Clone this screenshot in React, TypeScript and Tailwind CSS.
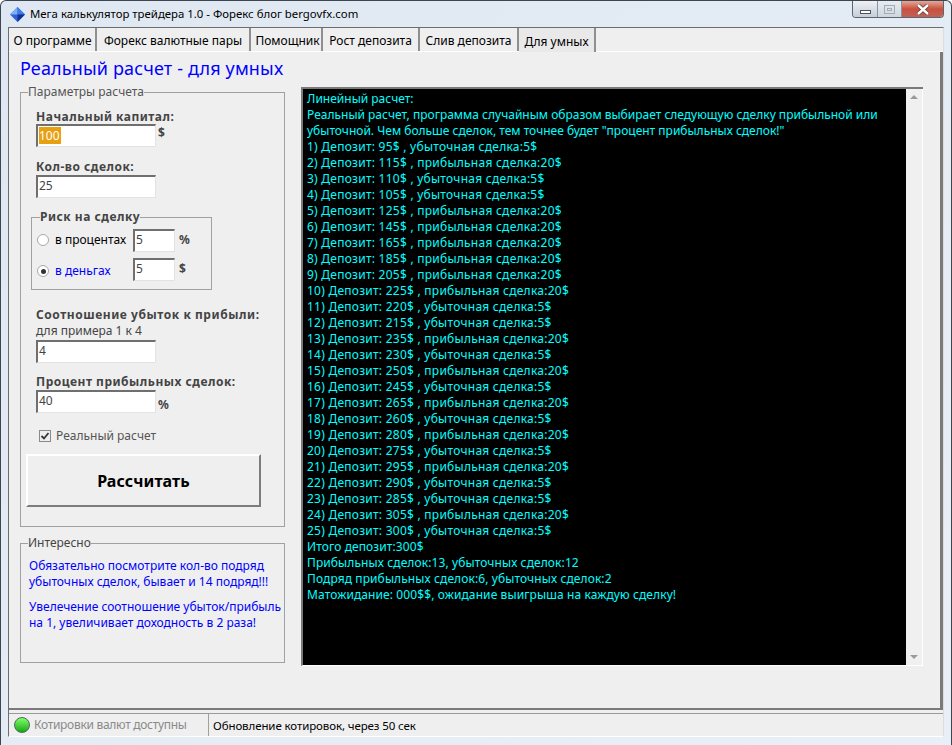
const tabs = [
  { label: "О программе", width: "w-[87px]" },
  { label: "Форекс валютные пары", width: "w-[154px]" },
  { label: "Помощник", width: "w-[72px] pl-[3px]" },
  { label: "Рост депозита", width: "w-[97px]" },
  { label: "Слив депозита", width: "w-[99px]" },
];

const deals = [
  "1) Депозит: 95$ , убыточная сделка:5$",
  "2) Депозит: 115$ , прибыльная сделка:20$",
  "3) Депозит: 110$ , убыточная сделка:5$",
  "4) Депозит: 105$ , убыточная сделка:5$",
  "5) Депозит: 125$ , прибыльная сделка:20$",
  "6) Депозит: 145$ , прибыльная сделка:20$",
  "7) Депозит: 165$ , прибыльная сделка:20$",
  "8) Депозит: 185$ , прибыльная сделка:20$",
  "9) Депозит: 205$ , прибыльная сделка:20$",
  "10) Депозит: 225$ , прибыльная сделка:20$",
  "11) Депозит: 220$ , убыточная сделка:5$",
  "12) Депозит: 215$ , убыточная сделка:5$",
  "13) Депозит: 235$ , прибыльная сделка:20$",
  "14) Депозит: 230$ , убыточная сделка:5$",
  "15) Депозит: 250$ , прибыльная сделка:20$",
  "16) Депозит: 245$ , убыточная сделка:5$",
  "17) Депозит: 265$ , прибыльная сделка:20$",
  "18) Депозит: 260$ , убыточная сделка:5$",
  "19) Депозит: 280$ , прибыльная сделка:20$",
  "20) Депозит: 275$ , убыточная сделка:5$",
  "21) Депозит: 295$ , прибыльная сделка:20$",
  "22) Депозит: 290$ , убыточная сделка:5$",
  "23) Депозит: 285$ , убыточная сделка:5$",
  "24) Депозит: 305$ , прибыльная сделка:20$",
  "25) Депозит: 300$ , убыточная сделка:5$",
];

const summary = [
  "Итого депозит:300$",
  "Прибыльных сделок:13, убыточных сделок:12",
  "Подряд прибыльных сделок:6, убыточных сделок:2",
  "Матожидание: 000$$, ожидание выигрыша на каждую сделку!",
];

const Field = ({ value, className = "w-[120px]" }: { value: string; className?: string }) => (
  <div className={`h-[23px] bg-white border border-[#e3e3e3] border-t-2 border-l-2 border-t-[#6f6f6f] border-l-[#6f6f6f] pl-[1px] text-[#444] leading-[17px] ${className}`}>
    {value}
  </div>
);

const Radio = ({ checked }: { checked?: boolean }) => (
  <span className="w-[12px] h-[12px] rounded-full bg-white border border-[#a8a8a8] flex items-center justify-center shrink-0">
    {checked && <span className="w-[5px] h-[5px] rounded-full bg-[#333]" />}
  </span>
);

export default function App() {
  return (
    <div className="w-[952px] h-[745px] overflow-hidden flex flex-col bg-gradient-to-br from-[#dfe8f2] to-[#e9eff6] border-t border-x border-[#3c4650] rounded-t-[6px] text-[12px] font-['Noto_Sans','Liberation_Sans',sans-serif]">
      {/* title bar */}
      <div className="h-[26px] shrink-0 flex items-start justify-between pl-[8px] pr-[7px]">
        <div className="flex items-center gap-[4px] h-[26px] text-black">
          <svg width="17" height="17" viewBox="0 0 17 17">
            <polygon points="8.5,1 16,8.5 8.5,16 1,8.5" fill="#2f62d8" />
            <polygon points="8.5,1 8.5,8.5 1,8.5" fill="#7fb0f5" />
            <polygon points="8.5,1 16,8.5 8.5,8.5" fill="#3f7ce8" />
            <polygon points="8.5,16 16,8.5 8.5,8.5" fill="#12308f" />
          </svg>
          <span className="text-[11.4px]">Мега калькулятор трейдера 1.0 - Форекс блог bergovfx.com</span>
        </div>
        <div className="flex h-[17px] border border-t-0 border-[#5a6570] rounded-b-[4px] overflow-hidden">
          <div className="w-[25px] bg-gradient-to-b from-[#eef1f5] to-[#c6ced8] border-r border-[#8a949e] flex items-center justify-center">
            <span className="w-[11px] h-[4px] bg-white border border-[#4a5560] mt-[5px]" />
          </div>
          <div className="w-[24px] bg-gradient-to-b from-[#e8edf3] to-[#cfd6de] border-r border-[#8a949e] flex items-center justify-center">
            <span className="w-[11px] h-[9px] border border-[#a4adb6] flex items-center justify-center">
              <span className="w-[5px] h-[3px] border border-[#a4adb6]" />
            </span>
          </div>
          <div className="w-[41px] bg-gradient-to-b from-[#e4a79a] via-[#c9503c] to-[#c0625a] flex items-center justify-center">
            <svg width="14" height="11" viewBox="0 0 14 11">
              <path d="M2 1 L12 10 M12 1 L2 10" stroke="#5a3a36" strokeWidth="4" />
              <path d="M2 1 L12 10 M12 1 L2 10" stroke="#ffffff" strokeWidth="2.4" />
            </svg>
          </div>
        </div>
      </div>

      {/* client area */}
      <div className="mx-[7px] h-[710px] flex flex-col border border-[#6d6d6d] border-r-[#d8dde3] border-b-white bg-[#efefef]">
        <div className="flex h-[24px] pl-[1px] border-b border-white shrink-0">
          {tabs.map((tab) => (
            <div key={tab.label} className={`${tab.width} h-[23px] pt-[3px] flex items-center justify-center border-r-2 border-[#8f8f8f] text-black`}>
              {tab.label}
            </div>
          ))}
          <div className="w-[77px] h-[24px] pt-[3px] flex items-center justify-center bg-[#e9e9e9] border-r-2 border-[#8f8f8f] text-black">
            Для умных
          </div>
        </div>

        <div className="flex-1 flex flex-col border-r-[3px] border-b-2 border-[#7a7a7a] px-[11px]">
          <h1 className="h-[34px] pt-[3px] text-[18px] leading-[26px] tracking-[0.15px] text-[#0000ff]">Реальный расчет - для умных</h1>
          <div className="flex gap-[16px]">
            <div className="w-[265px] shrink-0 flex flex-col gap-[9px]">
              <fieldset className="h-[442px] border border-[#a0a0a0] pl-[15px] pr-[5px] -mt-[1px]">
                <legend className="text-[#555] leading-[14px] px-0 -ml-[8px]">Параметры расчета</legend>
                <div className="font-bold tracking-[0.5px] text-[#444] mt-[10px] leading-[15px]">Начальный капитал:</div>
                <div className="flex items-start gap-[2px]">
                  <div className="w-[120px] h-[23px] bg-white border border-[#e3e3e3] border-t-2 border-l-2 border-t-[#6f6f6f] border-l-[#6f6f6f] pl-[1px] pt-[1px]">
                    <span className="block w-[22px] h-[17px] bg-[#e8a010] leading-[17px] text-white">100</span>
                  </div>
                  <span className="font-bold text-[#444]">$</span>
                </div>
                <div className="font-bold tracking-[0.5px] text-[#444] mt-[12px] leading-[16px]">Кол-во сделок:</div>
                <Field value="25" />
                <fieldset className="w-[181px] h-[80px] border border-[#a0a0a0] -ml-[5px] mt-[12px] pl-[5px]">
                  <legend className="font-bold tracking-[0.5px] text-[#444] leading-[14px] ml-[3px]">Риск на сделку</legend>
                  <div className="flex items-center h-[24px] mt-[4px]">
                    <Radio />
                    <span className="ml-[6px] w-[78px] text-black">в процентах</span>
                    <Field value="5" className="w-[42px] shrink-0" />
                    <span className="ml-[4px] font-bold text-[#444]">%</span>
                  </div>
                  <div className="flex items-start h-[24px] mt-[6px]">
                    <span className="mt-[7px]">
                      <Radio checked />
                    </span>
                    <span className="ml-[6px] mt-[4px] w-[78px] text-[#0000ff]">в деньгах</span>
                    <Field value="5" className="w-[42px] shrink-0" />
                    <span className="ml-[4px] mt-[2px] font-bold text-[#444]">$</span>
                  </div>
                </fieldset>
                <div className="font-bold tracking-[0.55px] whitespace-nowrap text-[#444] mt-[17px] leading-[16px]">Соотношение убыток к прибыли:</div>
                <div className="text-[#444] leading-[16px] mb-[1px]">для примера 1 к 4</div>
                <Field value="4" />
                <div className="font-bold tracking-[0.5px] text-[#444] mt-[11px] leading-[16px]">Процент прибыльных сделок:</div>
                <div className="flex items-end gap-[2px]">
                  <Field value="40" />
                  <span className="font-bold text-[#444] leading-[16px]">%</span>
                </div>
                <label className="flex items-center gap-[5px] mt-[14px] ml-[3px] text-[#555]">
                  <span className="w-[12px] h-[12px] border border-[#8a8a8a] bg-[#eee] flex items-center justify-center">
                    <svg width="10" height="10" viewBox="0 0 10 10">
                      <path d="M1.5 5 L4 7.5 L8.5 2" fill="none" stroke="#333" strokeWidth="1.8" />
                    </svg>
                  </span>
                  Реальный расчет
                </label>
                <button className="block w-[235px] h-[53px] -ml-[10px] mt-[9px] bg-[#efefef] border-2 border-white border-r-[#7c7c7c] border-b-[#7c7c7c] font-bold text-[16px] tracking-[0.1px] text-black">
                  Рассчитать
                </button>
              </fieldset>
              <fieldset className="h-[127px] border border-[#a0a0a0] pl-[8px] pr-[1px]">
                <legend className="text-[#444] leading-[14px] -ml-[1px]">Интересно</legend>
                <p className="text-[#0000ff] leading-[16px] mt-[8px]">Обязательно посмотрите кол-во подряд убыточных сделок, бывает и 14 подряд!!!</p>
                <p className="text-[#0000ff] leading-[16px] mt-[9px]">Увелечение соотношение убыток/прибыль на 1, увеличивает доходность в 2 раза!</p>
              </fieldset>
            </div>

            <div className="w-[622px] h-[579px] mt-[1px] flex border-t-2 border-l-2 border-[#7a7a7a] border-b border-b-white">
              <div className="flex-1 bg-black text-[#00ffff] leading-[16px] pl-[4px] pt-[2px] pr-[20px]">
                <div>Линейный расчет:</div>
                <div>Реальный расчет, программа случайным образом выбирает следующую сделку прибыльной или убыточной. Чем больше сделок, тем точнее будет "процент прибыльных сделок!"</div>
                {deals.map((line) => (
                  <div key={line} className="tracking-[0.25px]">{line}</div>
                ))}
                {summary.map((line) => (
                  <div key={line} className="tracking-[0.1px]">{line}</div>
                ))}
              </div>
              <div className="w-[17px] shrink-0 bg-[#f0f0f0] flex flex-col justify-between items-center py-[6px] border-r border-white">
                <span className="w-0 h-0 border-x-[4px] border-x-transparent border-b-[4px] border-b-[#9a9a9a]" />
                <span className="w-0 h-0 border-x-[4px] border-x-transparent border-t-[4px] border-t-[#9a9a9a]" />
              </div>
            </div>
          </div>
        </div>

        {/* status bar */}
        <div className="h-[23px] mt-[3px] shrink-0 flex items-center border-t border-[#9a9a9a]">
          <div className="w-[200px] h-full flex items-center gap-[4px] pl-[5px] border-r border-[#a0a0a0] text-[#8a8a8a] tracking-[-0.3px]">
            <span className="w-[16px] h-[16px] rounded-full bg-gradient-to-b from-[#7dff6a] to-[#0aa80a] border border-[#4a6a5a]" />
            Котировки валют доступны
          </div>
          <div className="pl-[4px] pt-[1px] text-black text-[11.5px] tracking-[-0.1px]">Обновление котировок, через 50 сек</div>
        </div>
      </div>
    </div>
  );
}
